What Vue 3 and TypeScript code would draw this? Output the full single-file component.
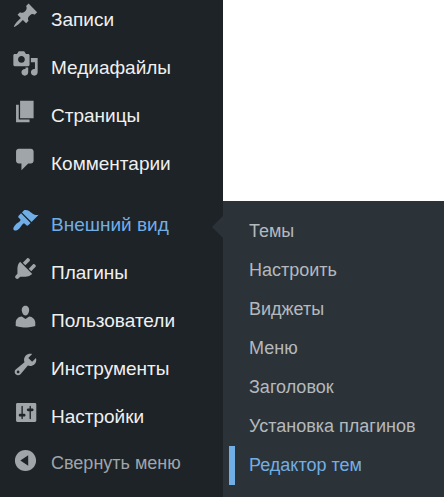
<script setup lang="ts">
interface MenuItem {
  label: string
  icon: string
  current?: boolean
}

const contentItems: MenuItem[] = [
  {
    label: 'Записи',
    icon: 'M10.44 3.02l1.82-1.82 6.36 6.35-1.83 1.82c-1.05-.68-2.48-.57-3.41.36l-.75.75c-.92.93-1.04 2.35-.35 3.41l-1.83 1.82-2.41-2.41-2.8 2.79c-.42.42-3.38 2.71-3.8 2.29s1.86-3.39 2.28-3.81l2.79-2.79L4.1 9.36l1.83-1.82c1.05.69 2.48.57 3.4-.36l.75-.75c.93-.92 1.05-2.35.36-3.41z',
  },
  {
    label: 'Медиафайлы',
    icon: 'M13 11V4c0-.55-.45-1-1-1h-1.67L9 1H5L3.67 3H2c-.55 0-1 .45-1 1v7c0 .55.45 1 1 1h10c.55 0 1-.45 1-1zM7 4.5c1.38 0 2.5 1.12 2.5 2.5S8.38 9.5 7 9.5 4.5 8.38 4.5 7 5.62 4.5 7 4.5zM14 6h5v10.5c0 1.38-1.12 2.5-2.5 2.5S14 17.88 14 16.5s1.12-2.5 2.5-2.5c.17 0 .34.02.5.05V9h-3V6zm-4 8.05V13h2v3.5c0 1.38-1.12 2.5-2.5 2.5S7 17.88 7 16.5 8.12 14 9.5 14c.17 0 .34.02.5.05z',
  },
  {
    label: 'Страницы',
    icon: 'M6 15V2h10v13H6zm-1 1h8v2H3V5h2v11z',
  },
  {
    label: 'Комментарии',
    icon: 'M5 2h9c1.1 0 2 .9 2 2v7c0 1.1-.9 2-2 2h-2l-5 5v-5H5c-1.1 0-2-.9-2-2V4c0-1.1.9-2 2-2z',
  },
]

const adminItems: MenuItem[] = [
  {
    label: 'Внешний вид',
    current: true,
    icon: 'M14.48 11.06L7.41 3.99l1.5-1.5c.5-.56 2.3-.47 3.51.32 1.21.8 1.43 1.28 2.91 2.1 1.18.64 2.45 1.26 4.45.85zm-.71.71L6.7 4.7 4.93 6.47c-.39.39-.39 1.02 0 1.41l1.06 1.06c.39.39.39 1.03 0 1.42-.6.6-1.43 1.11-2.21 1.69-.35.26-.7.53-1.01.84C1.43 14.23.4 16.08 1.4 17.07c.99 1 2.84-.03 4.18-1.36.31-.31.58-.66.85-1.02.57-.78 1.08-1.61 1.69-2.21.39-.39 1.02-.39 1.41 0l1.06 1.06c.39.39 1.02.39 1.41 0z',
  },
  {
    label: 'Плагины',
    icon: 'M13.11 4.36L9.87 7.6 8 5.73l3.24-3.24c.35-.34 1.05-.2 1.56.32.52.51.66 1.21.31 1.55zm-8 1.77l.91-1.12 9.01 9.01-1.19.84c-.71.71-2.63 1.16-3.82 1.16H6.14L4.9 17.26c-.59.59-1.54.59-2.12 0-.59-.58-.59-1.53 0-2.12l1.24-1.24v-3.88c0-1.13.4-3.19 1.09-3.89zm7.26 3.97l3.24-3.24c.34-.35 1.04-.21 1.55.31.52.51.66 1.21.31 1.55l-3.24 3.25z',
  },
  {
    label: 'Пользователи',
    icon: 'M10 9.25c-2.27 0-2.73-3.44-2.73-3.44C7 4.02 7.82 2 9.97 2c2.16 0 2.98 2.02 2.71 3.81 0 0-.41 3.44-2.68 3.44zm0 2.57L12.72 10c2.39 0 4.52 2.33 4.52 4.53v2.49s-3.65 1.13-7.24 1.13c-3.65 0-7.24-1.13-7.24-1.13v-2.49c0-2.25 1.94-4.48 4.47-4.48z',
  },
  {
    label: 'Инструменты',
    icon: 'M16.68 9.77c-1.34 1.34-3.3 1.67-4.95.99l-5.41 6.52c-.99.99-2.59.99-3.58 0s-.99-2.59 0-3.57l6.52-5.42c-.68-1.65-.35-3.61.99-4.95 1.28-1.28 3.12-1.62 4.72-1.06l-2.89 2.89 2.82 2.82 2.86-2.87c.53 1.58.18 3.39-1.08 4.65zM3.81 16.21c.4.39 1.04.39 1.43 0 .4-.4.4-1.04 0-1.43-.39-.4-1.03-.4-1.43 0-.39.39-.39 1.03 0 1.43z',
  },
  {
    label: 'Настройки',
    icon: 'M18 16V4c0-.55-.45-1-1-1H4c-.55 0-1 .45-1 1v12c0 .55.45 1 1 1h13c.55 0 1-.45 1-1zM8 11h1c.55 0 1 .45 1 1s-.45 1-1 1H8v1.5c0 .28-.22.5-.5.5s-.5-.22-.5-.5V13H6c-.55 0-1-.45-1-1s.45-1 1-1h1V5.5c0-.28.22-.5.5-.5s.5.22.5.5V11zm5-2h-1c-.55 0-1-.45-1-1s.45-1 1-1h1V5.5c0-.28.22-.5.5-.5s.5.22.5.5V7h1c.55 0 1 .45 1 1s-.45 1-1 1h-1v5.5c0 .28-.22.5-.5.5s-.5-.22-.5-.5V9z',
  },
]

const groups: MenuItem[][] = [contentItems, adminItems]

const submenu: string[] = [
  'Темы',
  'Настроить',
  'Виджеты',
  'Меню',
  'Заголовок',
  'Установка плагинов',
  'Редактор тем',
]
const activeSub = 'Редактор тем'
</script>

<template>
  <div class="admin">
    <nav class="sidebar">
      <ul v-for="(group, index) in groups" :key="index" class="group">
        <li v-for="item in group" :key="item.label">
          <a href="#" class="item" :class="{ current: item.current }">
            <svg class="icon" viewBox="0 0 20 20" aria-hidden="true"><path :d="item.icon" /></svg>
            <span class="label">{{ item.label }}</span>
          </a>
        </li>
      </ul>
      <button type="button" class="item collapse">
        <svg class="icon" viewBox="0 0 20 20" aria-hidden="true">
          <path d="M10 2.16c4.33 0 7.84 3.51 7.84 7.84s-3.51 7.84-7.84 7.84S2.16 14.33 2.16 10 5.71 2.16 10 2.16zm2 11.72V6.12L6.18 9.97z" />
        </svg>
        <span class="label">Свернуть меню</span>
      </button>
    </nav>
    <ul class="submenu">
      <li v-for="entry in submenu" :key="entry">
        <a href="#" class="sublink" :class="{ active: entry === activeSub }">{{ entry }}</a>
      </li>
    </ul>
  </div>
</template>

<style>
body {
  margin: 0;
  background: #fff;
}
</style>

<style scoped>
.admin {
  display: flex;
  min-height: 100vh;
  font-family: "Liberation Sans", Arial, sans-serif;
}

ul {
  margin: 0;
  padding: 0;
  list-style: none;
}

.sidebar {
  flex: 0 0 223px;
  background: #1d2327;
}

.group + .group {
  margin-top: 13px;
}

.item {
  position: relative;
  display: flex;
  align-items: flex-start;
  gap: 12px;
  height: 48px;
  padding: 2px 0 0 12px;
  box-sizing: border-box;
  color: #f0f0f1;
  font-size: 19px;
  line-height: 24px;
  text-decoration: none;
  white-space: nowrap;
}

.icon {
  flex: none;
  width: 27px;
  height: 27px;
  fill: #a0a5aa;
}

.label {
  padding-top: 6px;
}

.current {
  color: #72aee6;
}

.current .icon {
  fill: #72aee6;
}

.current::after {
  content: "";
  position: absolute;
  top: 11px;
  right: 0;
  border: 11px solid transparent;
  border-left-width: 0;
  border-right-color: #2c3338;
}

.collapse {
  width: 100%;
  border: 0;
  background: none;
  color: #a0a5aa;
  font-family: inherit;
  font-size: 18px;
  text-align: left;
}

.collapse .label {
  padding-top: 4px;
}

.submenu {
  flex: 1;
  margin-top: 201px;
  padding: 11px 0 0 6px;
  background: #2c3338;
}

.sublink {
  display: block;
  padding-left: 14px;
  border-left: 6px solid transparent;
  color: #b4b9be;
  font-size: 18px;
  line-height: 39px;
  text-decoration: none;
  white-space: nowrap;
}

.active {
  border-left-color: #72aee6;
  color: #72aee6;
}
</style>
